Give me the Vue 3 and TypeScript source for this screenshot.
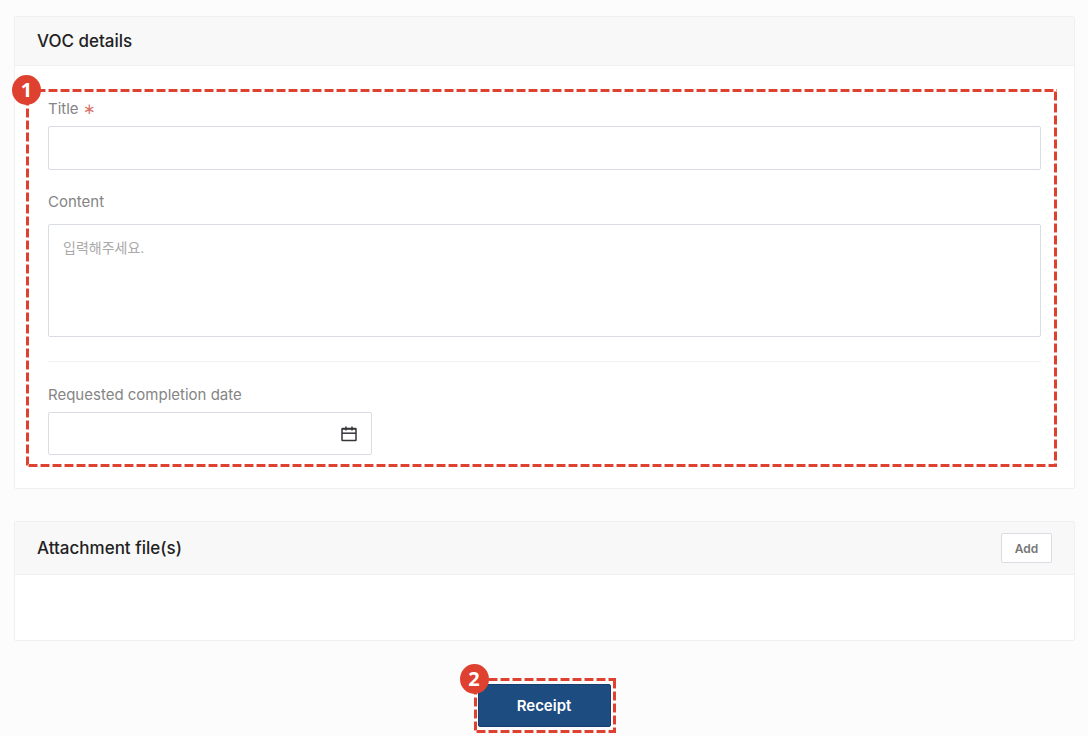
<script setup lang="ts">
import { ref } from 'vue'

const title = ref('')
const content = ref('')
const completionDate = ref('')
</script>

<template>
  <main class="page">
    <form @submit.prevent>
      <section class="card">
        <header class="card-head">
          <h2>VOC details</h2>
        </header>
        <div class="card-body">
          <div class="marked marked-fields">
            <span class="badge">1</span>
            <div class="field">
              <label for="title">Title <span class="required">∗</span></label>
              <input id="title" v-model="title" type="text" required />
            </div>
            <div class="field field-content">
              <label for="content">Content</label>
              <textarea id="content" v-model="content" placeholder="입력해주세요."></textarea>
            </div>
            <hr />
            <div class="field">
              <label for="date">Requested completion date</label>
              <div class="date-box">
                <input id="date" v-model="completionDate" type="text" />
                <button type="button" class="calendar" aria-label="Open calendar">
                  <svg viewBox="0 0 16 16" width="16" height="16" fill="none" stroke="#34363b">
                    <rect x="1" y="2.5" width="14" height="12" rx=".6" stroke-width="1.5" />
                    <path d="M1 3H15" stroke-width="1.5" />
                    <path d="M1 7.2H15" stroke-width="1.5" />
                    <path d="M5 .5V4.5M11 .5V4.5" stroke-width="1.5" />
                  </svg>
                </button>
              </div>
            </div>
          </div>
        </div>
      </section>

      <section class="card card-files">
        <header class="card-head card-head-files">
          <h2>Attachment file(s)</h2>
          <button type="button" class="add">Add</button>
        </header>
        <div class="files"></div>
      </section>

      <div class="actions">
        <div class="marked marked-submit">
          <span class="badge">2</span>
          <button type="submit" class="submit">Receipt</button>
        </div>
      </div>
    </form>
  </main>
</template>

<style>
html,
body {
  background: #fcfcfc;
}
</style>

<style scoped>
.page,
.page * {
  box-sizing: border-box;
}

.page {
  padding: 16px 13px 0 14px;
  font-family: Inter, 'Noto Sans CJK KR', sans-serif;
  color: #222;
}

input,
textarea,
button {
  font: inherit;
  margin: 0;
}

.card {
  border: 1px solid #f0f0f0;
  border-radius: 2px;
  background: #fff;
}

.card-files {
  margin-top: 32px;
}

.card-head {
  display: flex;
  align-items: center;
  justify-content: space-between;
  min-height: 49px;
  padding: 0 22px;
  border-bottom: 1px solid #f0f0f0;
  background: #f8f8f8;
}

.card-head-files {
  min-height: 53px;
}

h2 {
  margin: 0;
  font-size: 17px;
  font-weight: 500;
  line-height: 24px;
}

.card-body {
  padding: 23px 17px 21px 11px;
}

/* Dashed callout frame: one repeating strip per side, each with its own phase. */
.marked {
  --dash: #f0a49b 0 1px, #df4130 1px 9px, #f0a49b 9px 10px, transparent 10px 12px;
  position: relative;
  background-image:
    linear-gradient(90deg, var(--dash)),
    linear-gradient(180deg, var(--dash)),
    linear-gradient(90deg, var(--dash)),
    linear-gradient(180deg, var(--dash));
  background-size: 12px 3px, 3px 12px, 12px 3px, 3px 12px;
  background-repeat: repeat-x, repeat-y, repeat-x, repeat-y;
  background-position: 10px 0, 100% 2px, left 2px bottom 0, 0 7px;
}

.marked-fields {
  padding: 8px 16px 12px 22px;
}

.badge {
  position: absolute;
  top: -14px;
  left: -14px;
  display: flex;
  align-items: center;
  justify-content: center;
  width: 29px;
  height: 30px;
  border-radius: 50%;
  background: #df4130;
  color: #fff;
  font-family: 'Open Sans', sans-serif;
  font-size: 20px;
  font-weight: 700;
  line-height: 30px;
}

.field {
  display: flex;
  flex-direction: column;
  gap: 5px;
}

.field-content {
  gap: 10px;
  margin-top: 20px;
}

label {
  color: #858585;
  font-size: 15px;
  line-height: 24px;
}

.required {
  color: #d9736c;
}

input,
textarea {
  display: block;
  width: 100%;
  padding: 0 14px;
  border: 1px solid #d9dde3;
  border-radius: 2px;
  background: #fff;
  color: #222;
  font-size: 14px;
}

input {
  height: 44px;
}

textarea {
  height: 113px;
  padding: 12px 14px;
  line-height: 22px;
  resize: none;
}

textarea::placeholder {
  color: #aaa;
  opacity: 1;
}

hr {
  margin: 24px 0 21px;
  border: 0;
  border-top: 1px solid #f0f0f0;
}

.date-box {
  display: flex;
  align-items: center;
  width: 324px;
  height: 43px;
  padding-right: 14px;
  border: 1px solid #d9dde3;
  border-radius: 2px;
  background: #fff;
}

.date-box input {
  flex: 1;
  min-width: 0;
  height: 100%;
  border: 0;
}

.calendar {
  display: flex;
  padding: 0;
  border: 0;
  background: none;
}

.add {
  width: 51px;
  height: 30px;
  padding: 0;
  border: 1px solid #d9dde3;
  border-radius: 2px;
  background: #fff;
  color: #777;
  font-size: 12px;
  font-weight: 600;
}

.files {
  height: 65px;
}

.actions {
  display: flex;
  justify-content: center;
  padding-top: 37px;
}

.marked-submit {
  padding: 6px 5px 6px 4px;
  background-position: 2px 0, 100% 1px, left 2px bottom 0, 0 7px;
}

.submit {
  display: block;
  width: 133px;
  height: 43px;
  padding: 0;
  border: 1px solid #163f70;
  border-radius: 2px;
  background: #1d4c80;
  color: #fff;
  font-size: 15px;
  font-weight: 600;
}
</style>
